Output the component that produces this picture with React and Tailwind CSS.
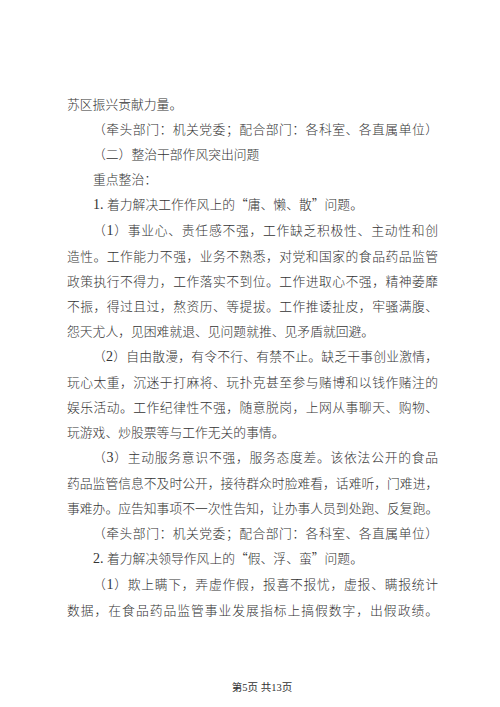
import React from "react";

const J = "[text-align-last:justify] text-justify whitespace-nowrap";

function D({ children }) {
  return <span className="[font-family:'Liberation_Serif',serif] text-[14px]">{children}</span>;
}

export default function App() {
  const lines = [
    { t: "苏区振兴贡献力量。" },
    { t: "（牵头部门：机关党委；配合部门：各科室、各直属单位）", i: true, j: true },
    { t: "（二）整治干部作风突出问题", i: true },
    { t: "重点整治：", i: true },
    { t: <><D>1. </D>着力解决工作作风上的“庸、懒、散”问题。</>, i: true },
    { t: <>（<D>1</D>）事业心、责任感不强，工作缺乏积极性、主动性和创</>, i: true, j: true },
    { t: "造性。工作能力不强，业务不熟悉，对党和国家的食品药品监管", j: true },
    { t: "政策执行不得力，工作落实不到位。工作进取心不强，精神萎靡", j: true },
    { t: "不振，得过且过，熬资历、等提拔。工作推诿扯皮，牢骚满腹、", j: true },
    { t: "怨天尤人，见困难就退、见问题就推、见矛盾就回避。" },
    { t: <>（<D>2</D>）自由散漫，有令不行、有禁不止。缺乏干事创业激情，</>, i: true, j: true },
    { t: "玩心太重，沉迷于打麻将、玩扑克甚至参与赌博和以钱作赌注的", j: true },
    { t: "娱乐活动。工作纪律性不强，随意脱岗，上网从事聊天、购物、", j: true },
    { t: "玩游戏、炒股票等与工作无关的事情。" },
    { t: <>（<D>3</D>）主动服务意识不强，服务态度差。该依法公开的食品</>, i: true, j: true },
    { t: "药品监管信息不及时公开，接待群众时脸难看，话难听，门难进，", j: true, s: true },
    { t: "事难办。应告知事项不一次性告知，让办事人员到处跑、反复跑。", j: true, s: true },
    { t: "（牵头部门：机关党委；配合部门：各科室、各直属单位）", i: true, j: true },
    { t: <><D>2. </D>着力解决领导作风上的“假、浮、蛮”问题。</>, i: true },
    { t: <>（<D>1</D>）欺上瞒下，弄虚作假，报喜不报忧，虚报、瞒报统计</>, i: true, j: true },
    { t: "数据，在食品药品监管事业发展指标上搞假数字，出假政绩。", j: true },
  ];
  return (
    <div className="w-[500px] h-[707px] bg-white overflow-hidden [font-family:'Noto_Sans_CJK_SC',sans-serif] font-light text-[#333333]">
      <div className="pt-[91px] pl-[67px] w-[438px]">
        {lines.map((l, k) => (
          <div
            key={k}
            className={
              "text-[12.8px] leading-[25px] " +
              (l.i ? "pl-[26px] " : "") +
              (l.j ? J + " " : "whitespace-nowrap ") +
              (l.s ? "tracking-[-0.25px]" : "")
            }
          >
            {l.t}
          </div>
        ))}
      </div>
      <div className="mt-[58px] pl-[24px] text-center text-[10.5px] font-normal text-[#333] [font-family:'Liberation_Serif','Noto_Sans_CJK_SC',serif]">
        第5页 共13页
      </div>
    </div>
  );
}
